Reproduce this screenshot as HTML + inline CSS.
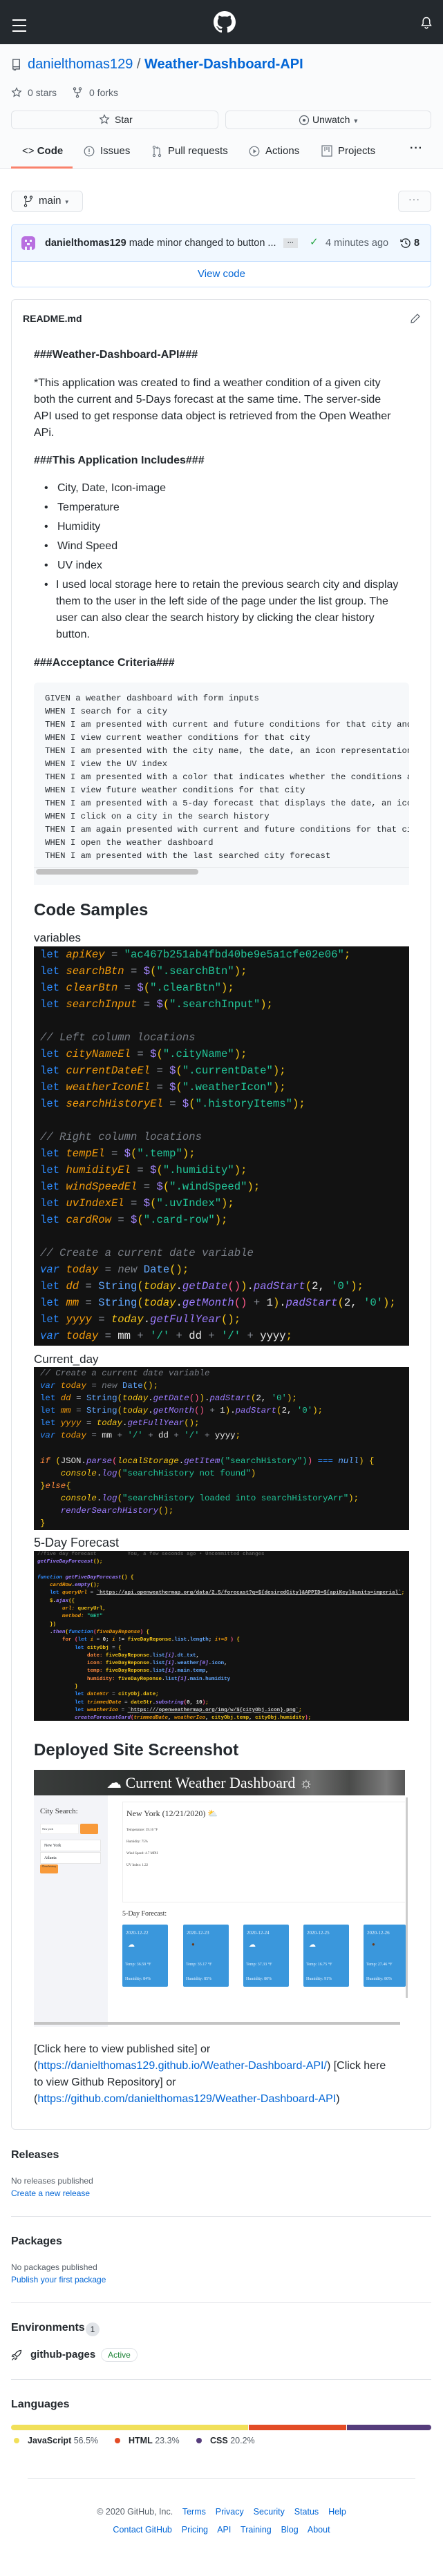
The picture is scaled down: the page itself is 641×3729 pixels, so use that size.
<!DOCTYPE html>
<html><head><meta charset="utf-8"><style>
*{margin:0;padding:0;box-sizing:border-box}
body{width:641px;height:3729px;position:relative;background:#fff;font-family:"Liberation Sans",Arial,sans-serif;color:#24292e;overflow:hidden}
.a{position:absolute;white-space:nowrap}
.blue{color:#0366d6}
.gray{color:#586069}
.t14{font-size:14px;line-height:20px}
.t16{font-size:16px;line-height:24px}
.mono{font-family:"Liberation Mono",monospace}
.btn{position:absolute;background:#fafbfc;border:1px solid #e1e4e8;border-radius:6px}
pre{margin:0}
.k{color:#2f8cff}.v{color:#f29b0c;font-style:italic}.s{color:#22c79a}.p{color:#a688ff}.c{color:#7a7f87;font-style:italic}.y{color:#f5c518}.w{color:#e6e6e6}.o{color:#8a8f98}.f{color:#9d7cff;font-style:italic}.r{color:#ff5a8a}.fn{color:#62a8ff}.org{color:#ff8a3d}
.card{position:absolute;top:2786px;height:90px;background:#3a97dc;border-radius:2px;color:#eaf4ff;font-family:"Liberation Serif",serif;font-size:6px}
</style></head><body>

<!-- header -->
<div class="a" style="left:0;top:0;width:641px;height:64px;background:#24292e"></div>
<svg class="a" style="left:17px;top:27px" width="22" height="22" viewBox="0 0 22 22"><path d="M1 2h20M1 10h20M1 18h20" stroke="#fff" stroke-width="2"/></svg>
<svg class="a" style="left:309px;top:16px" width="32" height="32" viewBox="0 0 16 16"><path fill="#fff" d="M8 0C3.58 0 0 3.580 0 8c0 3.54 2.29 6.53 5.47 7.59.4.07.55-.17.55-.38 0-.19-.01-.82-.01-1.49-2.010.37-2.53-.49-2.69-.94-.09-.23-.48-.94-.82-1.13-.28-.15-.68-.52-.01-.53.63-.01 1.08.58 1.23.82.72 1.21 1.87.87 2.33.66.07-.52.28-.87.51-1.07-1.78-.2-3.64-.89-3.64-3.95 0-.87.31-1.59.82-2.15-.08-.2-.36-1.02.08-2.12 0 0 .67-.21 2.2.82.64-.18 1.32-.27 2-.27.68 0 1.36.09 2 .27 1.53-1.04 2.2-.82 2.2-.82.44 1.1.16 1.92.08 2.12.51.56.82 1.27.82 2.15 0 3.07-1.87 3.75-3.65 3.95.29.25.54.73.54 1.48 0 1.07-.01 1.93-.01 2.2 0 .21.15.46.55.38A8.013 8.013 0 0016 8c0-4.42-3.58-8-8-8z"/></svg>
<svg class="a" style="left:609px;top:24px" width="16" height="18" viewBox="0 0 16 18"><path d="M8 1.5c-3 0-4.8 2.2-4.8 5v4L1.5 13h13l-1.7-2.5v-4c0-2.8-1.8-5-4.8-5zM6 15a2 2 0 004 0" fill="none" stroke="#fff" stroke-width="1.4"/></svg>

<!-- repo header -->
<div class="a" style="left:0;top:64px;width:641px;height:180px;background:#fafbfc;border-bottom:1px solid #e1e4e8"></div>
<svg class="a" style="left:17px;top:85px" width="13" height="17" viewBox="0 0 12 16"><path d="M1.5 1h9v10h-9zM1.5 11v3h2M5 14h5.5v-3M3 14v2l1-1 1 1v-2" fill="none" stroke="#586069" stroke-width="1.3"/></svg>
<div class="a blue" style="left:40px;top:81px;font-size:20px;line-height:24px">danielthomas129 <span style="color:#586069">/</span> <b>Weather-Dashboard-API</b></div>
<svg class="a" style="left:16px;top:126px" width="16" height="16" viewBox="0 0 16 16"><path d="M8 1.5l1.9 4 4.3.5-3.2 3 .9 4.3L8 11.2l-3.9 2.1.9-4.3-3.2-3 4.3-.5z" fill="none" stroke="#586069" stroke-width="1.2"/></svg>
<div class="a t14 gray" style="left:40px;top:124px">0 stars</div>
<svg class="a" style="left:105px;top:126px" width="14" height="16" viewBox="0 0 14 16"><circle cx="3" cy="2.5" r="1.6" fill="none" stroke="#586069" stroke-width="1.2"/><circle cx="11" cy="2.5" r="1.6" fill="none" stroke="#586069" stroke-width="1.2"/><circle cx="7" cy="13.5" r="1.6" fill="none" stroke="#586069" stroke-width="1.2"/><path d="M3 4v2c0 1.5 1 2 2 2h4c1 0 2-.5 2-2V4M7 8v4" fill="none" stroke="#586069" stroke-width="1.2"/></svg>
<div class="a t14 gray" style="left:129px;top:124px">0 forks</div>
<div class="btn" style="left:16px;top:160px;width:300px;height:27px"></div>
<svg class="a" style="left:143px;top:165px" width="16" height="16" viewBox="0 0 16 16"><path d="M8 1.5l1.9 4 4.3.5-3.2 3 .9 4.3L8 11.2l-3.9 2.1.9-4.3-3.2-3 4.3-.5z" fill="none" stroke="#586069" stroke-width="1.2"/></svg>
<div class="a t14" style="left:166px;top:163px">Star</div>
<div class="btn" style="left:326px;top:160px;width:298px;height:27px"></div>
<svg class="a" style="left:432px;top:166px" width="16" height="16" viewBox="0 0 16 16"><circle cx="8" cy="8" r="6.5" fill="none" stroke="#586069" stroke-width="1.2"/><circle cx="8" cy="8" r="2" fill="#586069"/></svg>
<div class="a t14" style="left:452px;top:163px">Unwatch <span style="font-size:9px;color:#586069">▼</span></div>

<!-- tabs -->
<div class="a t14" style="left:32px;top:209px;font-size:15px"><span style="color:#24292e">&lt;&gt;</span> <b style="font-weight:600">Code</b></div>
<svg class="a" style="left:121px;top:211px" width="16" height="16" viewBox="0 0 16 16"><circle cx="8" cy="8" r="6.8" fill="none" stroke="#6a737d" stroke-width="1.2"/><path d="M8 4v5M8 10.8v1.2" stroke="#6a737d" stroke-width="1.4"/></svg>
<div class="a t14" style="left:145px;top:209px;font-size:15px">Issues</div>
<svg class="a" style="left:220px;top:210px" width="14" height="18" viewBox="0 0 14 18"><circle cx="3" cy="3" r="1.6" fill="none" stroke="#6a737d" stroke-width="1.1"/><circle cx="3" cy="15" r="1.6" fill="none" stroke="#6a737d" stroke-width="1.1"/><circle cx="11" cy="15" r="1.6" fill="none" stroke="#6a737d" stroke-width="1.1"/><path d="M3 4.6v8.8M11 13.4V6c0-1.5-1-2-2-2H7M8 2.5L6.5 4 8 5.5" fill="none" stroke="#6a737d" stroke-width="1.1"/></svg>
<div class="a t14" style="left:243px;top:209px;font-size:15px">Pull requests</div>
<svg class="a" style="left:360px;top:211px" width="16" height="16" viewBox="0 0 16 16"><circle cx="8" cy="8" r="6.8" fill="none" stroke="#6a737d" stroke-width="1.2"/><path d="M6.5 5v6l4.5-3z" fill="#6a737d"/></svg>
<div class="a t14" style="left:384px;top:209px;font-size:15px">Actions</div>
<svg class="a" style="left:465px;top:210px" width="16" height="17" viewBox="0 0 16 17"><rect x="1" y="1" width="14" height="15" fill="none" stroke="#6a737d" stroke-width="1.2"/><path d="M5 3v6M8 3v4M11 3v7" stroke="#6a737d" stroke-width="1.2"/></svg>
<div class="a t14" style="left:489px;top:209px;font-size:15px">Projects</div>
<div class="a" style="left:593px;top:206px;font-size:16px;letter-spacing:1px;font-weight:bold">···</div>
<div class="a" style="left:16px;top:241px;width:89px;height:3px;background:#f9826c"></div>

<!-- branch -->
<div class="btn" style="left:16px;top:276px;width:104px;height:31px"></div>
<svg class="a" style="left:34px;top:283px" width="14" height="17" viewBox="0 0 14 17"><circle cx="3" cy="2.5" r="1.6" fill="none" stroke="#24292e" stroke-width="1.1"/><circle cx="3" cy="14.5" r="1.6" fill="none" stroke="#24292e" stroke-width="1.1"/><circle cx="11" cy="2.5" r="1.6" fill="none" stroke="#24292e" stroke-width="1.1"/><path d="M3 4v9M11 4v1.5c0 2-2 3-4 3H4" fill="none" stroke="#24292e" stroke-width="1.1"/></svg>
<div class="a t14" style="left:56px;top:281px;font-size:15px">main <span style="font-size:8px;color:#586069">▼</span></div>
<div class="btn" style="left:576px;top:276px;width:48px;height:31px"></div>
<div class="a" style="left:591px;top:280px;font-size:14px;color:#586069;letter-spacing:1px">···</div>

<!-- commit -->
<div class="a" style="left:16px;top:324px;width:608px;height:92px;border:1px solid #c8e1ff;border-radius:6px;background:#fff;overflow:hidden">
  <div style="height:54px;background:#f1f8ff;border-bottom:1px solid #c8e1ff"></div>
</div>
<svg class="a" style="left:31px;top:342px" width="20" height="20" viewBox="0 0 20 20"><rect width="20" height="20" rx="5" fill="#b86fe0"/><rect x="5" y="5" width="3" height="3" fill="#f1f8ff"/><rect x="12" y="5" width="3" height="3" fill="#f1f8ff"/><rect x="8" y="10" width="4" height="3" fill="#f1f8ff"/><rect x="5" y="15" width="3" height="5" fill="#f1f8ff"/><rect x="12" y="15" width="3" height="5" fill="#f1f8ff"/></svg>
<div class="a t14" style="left:65px;top:342px;font-size:14.5px"><b style="font-weight:600">danielthomas129</b> made minor changed to button ...</div>
<div class="a" style="left:410px;top:345px;width:21px;height:14px;background:#dfe2e5;font-size:9px;line-height:12px;text-align:center;font-weight:bold">···</div>
<div class="a" style="left:448px;top:341px;color:#28a745;font-size:15px">✓</div>
<div class="a t14 gray" style="left:471px;top:342px;font-size:14.5px">4 minutes ago</div>
<svg class="a" style="left:579px;top:344px" width="16" height="16" viewBox="0 0 16 16"><path d="M2.5 5A6.2 6.2 0 1 1 1.8 9" fill="none" stroke="#24292e" stroke-width="1.3"/><path d="M1 2.5v3h3" fill="none" stroke="#24292e" stroke-width="1.3"/><path d="M8 4.5V8l2.5 1.5" fill="none" stroke="#24292e" stroke-width="1.3"/></svg>
<div class="a t14" style="left:599px;top:342px;font-weight:bold;font-size:14.5px">8</div>
<div class="a t14 blue" style="left:0;width:641px;text-align:center;top:387px;font-size:15px">View code</div>

<!-- README box -->
<div class="a" style="left:16px;top:433px;width:608px;height:2650px;border:1px solid #e1e4e8;border-radius:6px"></div>
<div class="a t14" style="left:33px;top:451px;font-weight:600">README.md</div>
<svg class="a" style="left:593px;top:453px" width="16" height="16" viewBox="0 0 16 16"><path d="M11 2l3 3-8.5 8.5L2 14l.5-3.5z" fill="none" stroke="#586069" stroke-width="1.2"/></svg>

<div class="a t16" style="left:49px;top:502px;font-weight:bold">###Weather-Dashboard-API###</div>
<div class="a t16" style="left:49px;top:543px">*This application was created to find a weather condition of a given city<br>both the current and 5-Days forecast at the same time. The server-side<br>API used to get response data object is retrieved from the Open Weather<br>APi.</div>
<div class="a t16" style="left:49px;top:655px;font-weight:bold">###This Application Includes###</div>
<div class="a t16" style="left:64px;top:695px">•&nbsp;&nbsp;&nbsp;City, Date, Icon-image</div>
<div class="a t16" style="left:64px;top:723px">•&nbsp;&nbsp;&nbsp;Temperature</div>
<div class="a t16" style="left:64px;top:751px">•&nbsp;&nbsp;&nbsp;Humidity</div>
<div class="a t16" style="left:64px;top:779px">•&nbsp;&nbsp;&nbsp;Wind Speed</div>
<div class="a t16" style="left:64px;top:807px">•&nbsp;&nbsp;&nbsp;UV index</div>
<div class="a t16" style="left:64px;top:835px">•</div>
<div class="a t16" style="left:81px;top:835px">I used local storage here to retain the previous search city and display<br>them to the user in the left side of the page under the list group. The<br>user can also clear the search history by clicking the clear history<br>button.</div>
<div class="a t16" style="left:49px;top:948px;font-weight:bold">###Acceptance Criteria###</div>

<div class="a" style="left:49px;top:988px;width:543px;height:293px;background:#f6f8fa;border-radius:6px 6px 0 0;overflow:hidden">
<pre class="mono" style="font-size:12.3px;line-height:19px;color:#24292e;padding:14px 0 0 16px">GIVEN a weather dashboard with form inputs
WHEN I search for a city
THEN I am presented with current and future conditions for that city and that city is added
WHEN I view current weather conditions for that city
THEN I am presented with the city name, the date, an icon representation of weather
WHEN I view the UV index
THEN I am presented with a color that indicates whether the conditions are favorable
WHEN I view future weather conditions for that city
THEN I am presented with a 5-day forecast that displays the date, an icon representation
WHEN I click on a city in the search history
THEN I am again presented with current and future conditions for that city
WHEN I open the weather dashboard
THEN I am presented with the last searched city forecast</pre>
<div style="position:absolute;left:0;top:267px;width:543px;height:1px;background:#e6e8ea"></div>
<div style="position:absolute;left:3px;top:270px;width:235px;height:8px;background:#c1c1c1;border-radius:4px"></div>
</div>

<div class="a" style="left:49px;top:1302px;font-size:24px;line-height:32px;font-weight:bold">Code Samples</div>
<div class="a" style="left:49px;top:1347px;font-size:17px;line-height:22px">variables</div>

<div class="a" style="left:49px;top:1370px;width:543px;height:578px;background:#121212;overflow:hidden">
<pre class="mono" style="font-size:15.6px;line-height:24px;padding-left:9px;color:#e6e6e6"><span class="k">let</span> <span class="v">apiKey</span> <span class="o">=</span> <span class="s">"ac467b251ab4fbd40be9e5a1cfe02e06"</span><span class="y">;</span>
<span class="k">let</span> <span class="v">searchBtn</span> <span class="o">=</span> <span class="p">$</span><span class="y">(</span><span class="s">".searchBtn"</span><span class="y">);</span>
<span class="k">let</span> <span class="v">clearBtn</span> <span class="o">=</span> <span class="p">$</span><span class="y">(</span><span class="s">".clearBtn"</span><span class="y">);</span>
<span class="k">let</span> <span class="v">searchInput</span> <span class="o">=</span> <span class="p">$</span><span class="y">(</span><span class="s">".searchInput"</span><span class="y">);</span>

<span class="c">// Left column locations</span>
<span class="k">let</span> <span class="v">cityNameEl</span> <span class="o">=</span> <span class="p">$</span><span class="y">(</span><span class="s">".cityName"</span><span class="y">);</span>
<span class="k">let</span> <span class="v">currentDateEl</span> <span class="o">=</span> <span class="p">$</span><span class="y">(</span><span class="s">".currentDate"</span><span class="y">);</span>
<span class="k">let</span> <span class="v">weatherIconEl</span> <span class="o">=</span> <span class="p">$</span><span class="y">(</span><span class="s">".weatherIcon"</span><span class="y">);</span>
<span class="k">let</span> <span class="v">searchHistoryEl</span> <span class="o">=</span> <span class="p">$</span><span class="y">(</span><span class="s">".historyItems"</span><span class="y">);</span>

<span class="c">// Right column locations</span>
<span class="k">let</span> <span class="v">tempEl</span> <span class="o">=</span> <span class="p">$</span><span class="y">(</span><span class="s">".temp"</span><span class="y">);</span>
<span class="k">let</span> <span class="v">humidityEl</span> <span class="o">=</span> <span class="p">$</span><span class="y">(</span><span class="s">".humidity"</span><span class="y">);</span>
<span class="k">let</span> <span class="v">windSpeedEl</span> <span class="o">=</span> <span class="p">$</span><span class="y">(</span><span class="s">".windSpeed"</span><span class="y">);</span>
<span class="k">let</span> <span class="v">uvIndexEl</span> <span class="o">=</span> <span class="p">$</span><span class="y">(</span><span class="s">".uvIndex"</span><span class="y">);</span>
<span class="k">let</span> <span class="v">cardRow</span> <span class="o">=</span> <span class="p">$</span><span class="y">(</span><span class="s">".card-row"</span><span class="y">);</span>

<span class="c">// Create a current date variable</span>
<span class="k" style="font-style:italic">var</span> <span class="v">today</span> <span class="o">=</span> <span class="c">new</span> <span class="fn">Date</span><span class="y">();</span>
<span class="k">let</span> <span class="v">dd</span> <span class="o">=</span> <span class="fn">String</span><span class="y">(</span><span class="y" style="font-style:italic">today</span>.<span class="f">getDate</span><span class="r">()</span><span class="y">)</span>.<span class="f">padStart</span><span class="y">(</span>2, <span class="s">'0'</span><span class="y">);</span>
<span class="k">let</span> <span class="v">mm</span> <span class="o">=</span> <span class="fn">String</span><span class="y">(</span><span class="y" style="font-style:italic">today</span>.<span class="f">getMonth</span><span class="r">()</span> <span class="o">+</span> 1<span class="y">)</span>.<span class="f">padStart</span><span class="y">(</span>2, <span class="s">'0'</span><span class="y">);</span>
<span class="k">let</span> <span class="v">yyyy</span> <span class="o">=</span> <span class="y" style="font-style:italic">today</span>.<span class="f">getFullYear</span><span class="y">();</span>
<span class="k" style="font-style:italic">var</span> <span class="v">today</span> <span class="o">=</span> mm <span class="o">+</span> <span class="s">'/'</span> <span class="o">+</span> dd <span class="o">+</span> <span class="s">'/'</span> <span class="o">+</span> yyyy<span class="y">;</span></pre>
</div>

<div class="a" style="left:49px;top:1957px;font-size:17px;line-height:22px">Current_day</div>
<div class="a" style="left:49px;top:1979px;width:543px;height:236px;background:#121212;overflow:hidden">
<pre class="mono" style="font-size:12.4px;line-height:18.1px;padding-left:9px;color:#e6e6e6"><span class="c">// Create a current date variable</span>
<span class="k" style="font-style:italic">var</span> <span class="v">today</span> <span class="o">=</span> <span class="c">new</span> <span class="fn">Date</span><span class="y">();</span>
<span class="k">let</span> <span class="v">dd</span> <span class="o">=</span> <span class="fn">String</span><span class="y">(</span><span class="y" style="font-style:italic">today</span>.<span class="f">getDate</span><span class="r">()</span><span class="y">)</span>.<span class="f">padStart</span><span class="y">(</span>2, <span class="s">'0'</span><span class="y">);</span>
<span class="k">let</span> <span class="v">mm</span> <span class="o">=</span> <span class="fn">String</span><span class="y">(</span><span class="y" style="font-style:italic">today</span>.<span class="f">getMonth</span><span class="r">()</span> <span class="o">+</span> 1<span class="y">)</span>.<span class="f">padStart</span><span class="y">(</span>2, <span class="s">'0'</span><span class="y">);</span>
<span class="k">let</span> <span class="v">yyyy</span> <span class="o">=</span> <span class="y" style="font-style:italic">today</span>.<span class="f">getFullYear</span><span class="y">();</span>
<span class="k" style="font-style:italic">var</span> <span class="v">today</span> <span class="o">=</span> mm <span class="o">+</span> <span class="s">'/'</span> <span class="o">+</span> dd <span class="o">+</span> <span class="s">'/'</span> <span class="o">+</span> yyyy<span class="y">;</span>

<span class="org" style="font-style:italic">if</span> <span class="y">(</span>JSON.<span class="f">parse</span><span class="r">(</span><span class="y" style="font-style:italic">localStorage</span>.<span class="f">getItem</span><span class="s">("searchHistory")</span><span class="r">)</span> <span class="k">===</span> <span class="fn" style="font-style:italic">null</span><span class="y">) {</span>
    <span class="y" style="font-style:italic">console</span>.<span class="f">log</span><span class="y">(</span><span class="s">"searchHistory not found"</span><span class="y">)</span>
<span class="y">}</span><span class="org" style="font-style:italic">else</span><span class="y">{</span>
    <span class="y" style="font-style:italic">console</span>.<span class="f">log</span><span class="y">(</span><span class="s">"searchHistory loaded into searchHistoryArr"</span><span class="y">);</span>
    <span class="f">renderSearchHistory</span><span class="y">();</span>
<span class="y">}</span></pre>
</div>

<div class="a" style="left:49px;top:2221px;font-size:18px;line-height:24px">5-Day Forecast</div>
<div class="a" style="left:49px;top:2245px;width:543px;height:246px;background:#121212;overflow:hidden">
<pre class="mono" style="font-size:7.5px;line-height:11.3px;padding-left:5px;color:#e6e6e6;font-weight:bold"><span style="color:#555">//five day forecast          You, a few seconds ago • Uncommitted changes</span>
<span class="f">getFiveDayForecast</span><span class="y">();</span>

<span class="k" style="font-style:italic">function</span> <span class="f">getFiveDayForecast</span><span class="y">() {</span>
    <span class="v">cardRow</span>.<span class="f">empty</span><span class="y">();</span>
    <span class="k">let</span> <span class="v">queryUrl</span> <span class="o">=</span> <span class="s" style="color:#cfcfcf;text-decoration:underline">`https://api.openweathermap.org/data/2.5/forecast?q=${desiredCity}&amp;APPID=${apiKey}&amp;units=imperial`</span><span class="y">;</span>
    <span class="y">$</span>.<span class="f">ajax</span><span class="y">({</span>
        <span class="v">url:</span> <span class="y">queryUrl,</span>
        <span class="v">method:</span> <span class="s">"GET"</span>
    <span class="y">})</span>
    .<span class="f">then</span><span class="y">(</span><span class="k" style="font-style:italic">function</span><span class="r">(</span><span class="v">fiveDayReponse</span><span class="r">)</span> <span class="y">{</span>
        <span class="org">for</span> <span class="r">(</span><span class="k">let</span> <span class="v">i</span> <span class="o">=</span> 0; <span class="v">i</span> != <span class="y">fiveDayReponse</span>.<span class="fn">list</span>.<span class="fn">length</span>; <span class="v">i+=8</span> <span class="r">)</span> <span class="y">{</span>
            <span class="k">let</span> <span class="y">cityObj</span> <span class="o">=</span> <span class="y">{</span>
                <span class="org">date:</span> <span class="y">fiveDayReponse</span>.<span class="fn">list</span><span class="f">[i]</span>.<span class="fn">dt_txt</span>,
                <span class="org">icon:</span> <span class="y">fiveDayReponse</span>.<span class="fn">list</span><span class="f">[i]</span>.<span class="fn">weather</span><span class="f">[0]</span>.<span class="fn">icon</span>,
                <span class="org">temp:</span> <span class="y">fiveDayReponse</span>.<span class="fn">list</span><span class="f">[i]</span>.<span class="fn">main.temp</span>,
                <span class="org">humidity:</span> <span class="y">fiveDayReponse</span>.<span class="fn">list</span><span class="f">[i]</span>.<span class="fn">main.humidity</span>
            <span class="y">}</span>
            <span class="k">let</span> <span class="v">dateStr</span> <span class="o">=</span> <span class="y">cityObj.date;</span>
            <span class="k">let</span> <span class="v">trimmedDate</span> <span class="o">=</span> <span class="y">dateStr</span>.<span class="f">substring</span><span class="r">(</span>0, 10<span class="r">)</span><span class="y">;</span>
            <span class="k">let</span> <span class="v">weatherIco</span> <span class="o">=</span> <span style="color:#cfcfcf;text-decoration:underline">`https:///openweathermap.org/img/w/${cityObj.icon}.png`</span><span class="y">;</span>
            <span class="f">createForecastCard</span><span class="r">(</span><span class="v">trimmedDate</span>, <span class="v">weatherIco</span>, <span class="y">cityObj.temp</span>, <span class="y">cityObj.humidity</span><span class="r">)</span><span class="y">;</span></pre>
</div>

<div class="a" style="left:49px;top:2518px;font-size:24px;line-height:32px;font-weight:bold">Deployed Site Screenshot</div>

<!-- deployed screenshot -->
<div class="a" style="left:49px;top:2562px;width:543px;height:372px;background:#fff;overflow:hidden;font-family:'Liberation Serif',serif">
  <div style="position:absolute;left:0;top:0;width:537px;height:37px;background:linear-gradient(90deg,#3a3d3c 0%,#2b2e2d 30%,#333 60%,#6e6f6e 75%,#4a4b4a 85%,#7a7a7a 95%,#555 100%)"></div>
  <div style="position:absolute;left:105px;top:5px;color:#fff;font-size:22px;line-height:28px;white-space:nowrap">☁ Current Weather Dashboard ☼</div>
  <div style="position:absolute;left:0;top:37px;width:107px;height:335px;background:#f3f4f8"></div>
  <div style="position:absolute;left:9px;top:54px;font-size:11px;color:#333">City Search:</div>
  <div style="position:absolute;left:9px;top:78px;width:56px;height:15px;background:#fff;border:1px solid #eee;font-size:4px;line-height:13px;padding-left:2px">New york</div>
  <div style="position:absolute;left:67px;top:78px;width:26px;height:15px;background:#f89a3a;border-radius:2px"></div>
  <div style="position:absolute;left:9px;top:101px;width:88px;height:17px;background:#fff;border:1px solid #e6e6e6;font-size:6px;line-height:16px;padding-left:5px">New York</div>
  <div style="position:absolute;left:9px;top:119px;width:88px;height:17px;background:#fff;border:1px solid #e6e6e6;font-size:6px;line-height:16px;padding-left:5px">Atlanta</div>
  <div style="position:absolute;left:9px;top:137px;width:26px;height:13px;background:#f89a3a;border-radius:2px;font-size:4px;text-align:center;line-height:6px">Clear history</div>
  <div style="position:absolute;left:128px;top:46px;width:415px;height:146px;border:1px solid #eee"></div>
  <div style="position:absolute;left:134px;top:56px;font-size:12px;color:#333;white-space:nowrap">New York (12/21/2020) ⛅</div>
  <div style="position:absolute;left:134px;top:79px;font-size:5px;line-height:17px;color:#444">Temperature: 39.16 °F<br>Humidity: 75%<br>Wind Speed: 4.7 MPH<br>UV Index: 1.22</div>
  <div style="position:absolute;left:128px;top:203px;font-size:10px;color:#333">5-Day Forecast:</div>
  <div style="position:absolute;left:537px;top:0;width:6px;height:372px;background:#fff"></div>
  <div style="position:absolute;left:538px;top:40px;width:3px;height:290px;background:#ccc"></div>
  <div style="position:absolute;left:0;top:365px;width:530px;height:4px;background:#c4c4c4"></div>
</div>
<div class="card" style="left:177px;width:66px"><div style="padding:8px 5px;font-size:7px">2020-12-22</div><div style="padding:0 8px;font-size:10px;color:#fff">☁</div><div style="position:absolute;left:4px;top:55px">Temp: 36.59 °F</div><div style="position:absolute;left:4px;top:76px">Humidity: 84%</div></div>
<div class="card" style="left:265px;width:66px"><div style="padding:8px 5px;font-size:7px">2020-12-23</div><div style="padding:0 12px;font-size:8px;color:#6b3a1a">●</div><div style="position:absolute;left:4px;top:55px">Temp: 35.17 °F</div><div style="position:absolute;left:4px;top:76px">Humidity: 85%</div></div>
<div class="card" style="left:352px;width:66px"><div style="padding:8px 5px;font-size:7px">2020-12-24</div><div style="padding:0 8px;font-size:10px;color:#fff">☁</div><div style="position:absolute;left:4px;top:55px">Temp: 37.33 °F</div><div style="position:absolute;left:4px;top:76px">Humidity: 80%</div></div>
<div class="card" style="left:439px;width:66px"><div style="padding:8px 5px;font-size:7px">2020-12-25</div><div style="padding:0 8px;font-size:10px;color:#fff">☁</div><div style="position:absolute;left:4px;top:55px">Temp: 16.75 °F</div><div style="position:absolute;left:4px;top:76px">Humidity: 91%</div></div>
<div class="card" style="left:526px;width:61px"><div style="padding:8px 5px;font-size:7px">2020-12-26</div><div style="padding:0 12px;font-size:8px;color:#6b3a1a">●</div><div style="position:absolute;left:4px;top:55px">Temp: 27.46 °F</div><div style="position:absolute;left:4px;top:76px">Humidity: 80%</div></div>

<div class="a t16" style="left:49px;top:2955px">[Click here to view published site] or<br>(<span class="blue">https://danielthomas129.github.io/Weather-Dashboard-API/</span>) [Click here<br>to view Github Repository] or<br>(<span class="blue">https://github.com/danielthomas129/Weather-Dashboard-API</span>)</div>

<!-- sidebar sections -->
<div class="a" style="left:16px;top:3109px;font-size:16px;line-height:22px;font-weight:600">Releases</div>
<div class="a gray" style="left:16px;top:3149px;font-size:12px;line-height:16px">No releases published</div>
<div class="a blue" style="left:16px;top:3167px;font-size:12px;line-height:16px">Create a new release</div>
<div class="a" style="left:16px;top:3208px;width:608px;height:1px;background:#e1e4e8"></div>
<div class="a" style="left:16px;top:3234px;font-size:16px;line-height:22px;font-weight:600">Packages</div>
<div class="a gray" style="left:16px;top:3274px;font-size:12px;line-height:16px">No packages published</div>
<div class="a blue" style="left:16px;top:3292px;font-size:12px;line-height:16px">Publish your first package</div>
<div class="a" style="left:16px;top:3333px;width:608px;height:1px;background:#e1e4e8"></div>
<div class="a" style="left:16px;top:3359px;font-size:16px;line-height:22px;font-weight:600">Environments</div>
<div class="a" style="left:124px;top:3362px;width:20px;height:20px;border-radius:10px;background:#e1e4e8;font-size:12px;line-height:20px;text-align:center">1</div>
<svg class="a" style="left:16px;top:3401px" width="16" height="17" viewBox="0 0 16 17"><path d="M14.5 1.5c-4 0-7 2.5-9 6l3 3c3.5-2 6-5 6-9zM5.5 7.5L2.5 8 1.5 10l3 .5M8.5 10.5L8 13.5 6 14.5 5.5 11.5M4 12.5L1.5 15.5" fill="none" stroke="#24292e" stroke-width="1.2"/></svg>
<div class="a t14" style="left:44px;top:3399px;font-size:15px;font-weight:600">github-pages</div>
<div class="a" style="left:146px;top:3399px;width:53px;height:20px;border:1px solid #e1e4e8;border-radius:10px;color:#22863a;font-size:12px;line-height:18px;text-align:center">Active</div>
<div class="a" style="left:16px;top:3444px;width:608px;height:1px;background:#e1e4e8"></div>
<div class="a" style="left:16px;top:3470px;font-size:16px;line-height:22px;font-weight:600">Languages</div>
<div class="a" style="left:16px;top:3510px;width:608px;height:8px;border-radius:4px;overflow:hidden;background:#fff">
  <div style="position:absolute;left:0;top:0;width:343px;height:8px;background:#f1e05a"></div>
  <div style="position:absolute;left:344px;top:0;width:141px;height:8px;background:#e34c26"></div>
  <div style="position:absolute;left:486px;top:0;width:122px;height:8px;background:#563d7c"></div>
</div>
<div class="a" style="left:20px;top:3529px;width:8px;height:8px;border-radius:4px;background:#f1e05a"></div>
<div class="a" style="left:40px;top:3525px;font-size:12.5px;line-height:16px"><b style="font-weight:600">JavaScript</b> <span class="gray">56.5%</span></div>
<div class="a" style="left:166px;top:3529px;width:8px;height:8px;border-radius:4px;background:#e34c26"></div>
<div class="a" style="left:186px;top:3525px;font-size:12.5px;line-height:16px"><b style="font-weight:600">HTML</b> <span class="gray">23.3%</span></div>
<div class="a" style="left:284px;top:3529px;width:8px;height:8px;border-radius:4px;background:#563d7c"></div>
<div class="a" style="left:304px;top:3525px;font-size:12.5px;line-height:16px"><b style="font-weight:600">CSS</b> <span class="gray">20.2%</span></div>

<!-- footer -->
<div class="a" style="left:40px;top:3587px;width:561px;height:1px;background:#e1e4e8"></div>
<div class="a" style="left:0;width:641px;top:3628px;text-align:center;font-size:12.5px;line-height:16px"><span class="gray">© 2020 GitHub, Inc.</span>&nbsp;&nbsp;&nbsp; <span class="blue">Terms</span>&nbsp;&nbsp;&nbsp; <span class="blue">Privacy</span>&nbsp;&nbsp;&nbsp; <span class="blue">Security</span>&nbsp;&nbsp;&nbsp; <span class="blue">Status</span>&nbsp;&nbsp;&nbsp; <span class="blue">Help</span></div>
<div class="a" style="left:0;width:641px;top:3654px;text-align:center;font-size:12.5px;line-height:16px"><span class="blue">Contact GitHub</span>&nbsp;&nbsp;&nbsp; <span class="blue">Pricing</span>&nbsp;&nbsp;&nbsp; <span class="blue">API</span>&nbsp;&nbsp;&nbsp; <span class="blue">Training</span>&nbsp;&nbsp;&nbsp; <span class="blue">Blog</span>&nbsp;&nbsp;&nbsp; <span class="blue">About</span></div>
</body></html>
